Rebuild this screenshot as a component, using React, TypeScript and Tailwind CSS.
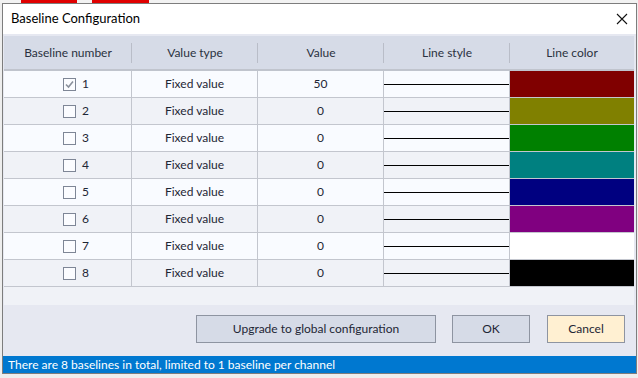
import React from "react";

const colors = ["#800000", "#808000", "#008000", "#008080", "#000080", "#800080", "#ffffff", "#000000"];

const rows = colors.map((color, i) => ({
  id: i + 1,
  checked: i === 0,
  value: i === 0 ? "50" : "0",
  color,
}));

const Checkbox = ({ checked }: { checked: boolean }) => (
  <div className="w-[13px] h-[13px] border border-[#7e8696] bg-[#fbfcff] flex items-center justify-center">
    {checked && (
      <svg width="11" height="11" viewBox="0 0 11 11">
        <path d="M2 5.5 L4.5 8 L9 2.5" fill="none" stroke="#8a909c" strokeWidth="1.6" />
      </svg>
    )}
  </div>
);

const HeaderCell = ({ label, last }: { label: string; last?: boolean }) => (
  <div className="relative flex items-center justify-center h-[33px] text-[#2a3140]">
    {label}
    {!last && <div className="absolute right-0 top-[7px] h-[20px] w-px bg-[#b9bdc8]" />}
  </div>
);

export default function App() {
  return (
    <div
      className="w-[638px] h-[378px] overflow-hidden bg-[#eeeeee] text-[12px]"
      style={{ fontFamily: 'Lato, "Noto Sans", sans-serif' }}
    >
      {/* bit of the chart behind the dialog */}
      <div className="flex h-[3px] bg-[#f2f2f2]">
        <div className="w-[21px]" />
        <div className="w-[56px] bg-[#e00000]" />
        <div className="w-[15px]" />
        <div className="w-[57px] bg-[#e00000]" />
      </div>
      <div className="ml-[2px] w-[635px] h-[371px] border border-[#7d7d7d] flex flex-col bg-[#e6e8f1]">
        {/* title bar */}
        <div className="h-[30px] shrink-0 bg-white flex items-center justify-between pl-[8px] pr-[8px]">
          <span className="text-[13px] text-black">Baseline Configuration</span>
          <svg width="12" height="12" viewBox="0 0 12 12">
            <path d="M1 1 L11 11 M11 1 L1 11" stroke="#111" strokeWidth="1.1" />
          </svg>
        </div>

        {/* table */}
        <div className="mt-[2px] ml-px w-[630px] h-[269px] bg-[#f0f2f7]">
          <div className="grid grid-cols-[128px_126px_126px_126px_124px] bg-[#d6dbe7] border-b-2 border-[#c0c4cd]">
            <HeaderCell label="Baseline number" />
            <HeaderCell label="Value type" />
            <HeaderCell label="Value" />
            <HeaderCell label="Line style" />
            <HeaderCell label="Line color" last />
          </div>
          {rows.map((row) => (
            <div
              key={row.id}
              className={`grid grid-cols-[128px_126px_126px_126px_124px] h-[27px] border-b border-[#c3c6ce] text-[#1e2635] ${
                row.id % 2 === 1 ? "bg-[#f9fbff]" : "bg-[#f0f2f7]"
              }`}
            >
              <div className="flex items-center pl-[59px] gap-[6px] border-r border-[#c3c6ce]">
                <Checkbox checked={row.checked} />
                <span>{row.id}</span>
              </div>
              <div className="flex items-center justify-center border-r border-[#c3c6ce]">Fixed value</div>
              <div className="flex items-center justify-center border-r border-[#c3c6ce]">{row.value}</div>
              <div className="flex items-center border-r border-[#c3c6ce]">
                <div className="w-full h-px bg-black" />
              </div>
              <div style={{ backgroundColor: row.color }} />
            </div>
          ))}
        </div>

        {/* buttons */}
        <div className="flex justify-end gap-[16px] pr-[11px] mt-[10px] text-[#1e2635]">
          <button className="w-[240px] h-[28px] bg-[#d6dbe7] border border-[#8e94a1]">
            Upgrade to global configuration
          </button>
          <button className="w-[78px] h-[28px] bg-[#d6dbe7] border border-[#8e94a1]">OK</button>
          <button className="ml-px w-[78px] h-[28px] bg-[#fff0d2] border border-[#8e94a1]">Cancel</button>
        </div>

        {/* status bar */}
        <div className="mt-auto h-[17px] bg-[#0078d0] text-white flex items-center pl-[5px]">
          There are 8 baselines in total, limited to 1 baseline per channel
        </div>
      </div>
    </div>
  );
}
